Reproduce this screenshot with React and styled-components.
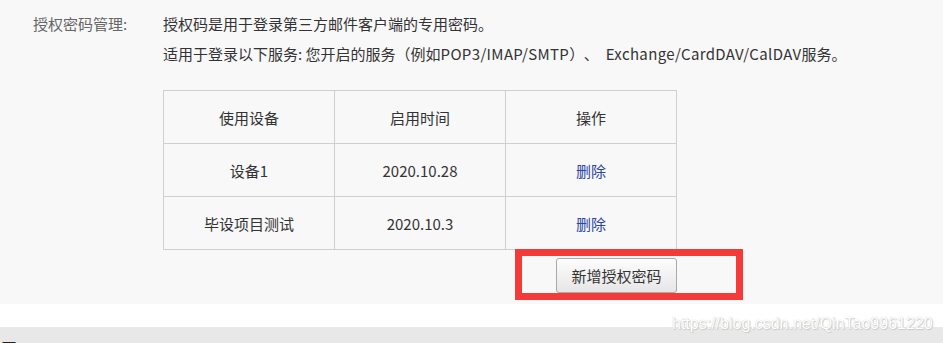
import React from "react";
import styled, { createGlobalStyle } from "styled-components";

const Global = createGlobalStyle`
  html, body { margin: 0; padding: 0; background: #ffffff; }
  body { font-family: "Noto Sans CJK SC", "Noto Sans", sans-serif; }
`;

const Page = styled.div`
  position: relative;
  width: 943px;
  height: 343px;
  overflow: hidden;
  display: flex;
  flex-direction: column;
`;

const Panel = styled.section`
  height: 304px;
  background: #f8f8f8;
  display: flex;
  padding-top: 9px;
  box-sizing: border-box;
`;

const Label = styled.div`
  width: 130px;
  padding-left: 33px;
  font-size: 15px;
  line-height: 30px;
  color: #666;
  flex: none;
`;

const Content = styled.div`
  display: flex;
  flex-direction: column;
`;

const Line = styled.p`
  margin: 0;
  font-size: 15px;
  line-height: 30px;
  color: #333;
  white-space: nowrap;
`;

const Latin = styled.span`
  letter-spacing: 0.35px;
`;

const Punct = styled.span`
  letter-spacing: ${(p) => p.$gap || 0}px;
`;

const Table = styled.table`
  margin-top: 21px;
  width: 514px;
  border-collapse: collapse;
  table-layout: fixed;
  font-size: 15px;
  color: #333;
`;

const Cell = styled.td`
  border: 1px solid #cfcfcf;
  height: 52px;
  padding: 0;
  text-align: center;
  font-weight: normal;
  color: ${(p) => (p.$link ? "#2a45a3" : "#333")};
`;

const ButtonRow = styled.div`
  padding-top: 8px;
  padding-left: 393px;
`;

const Button = styled.button`
  width: 121px;
  height: 35px;
  border: 1px solid #a9a9a9;
  border-radius: 3px;
  background: linear-gradient(#fdfdfd, #e6e6e6);
  font-family: inherit;
  font-size: 15px;
  color: #333;
  padding: 0;
`;

const WhiteStrip = styled.div`
  height: 23px;
  background: #ffffff;
`;

const GreyStrip = styled.div`
  flex: 1;
  background: #e8e8e8;
  display: flex;
  align-items: flex-end;
  padding-left: 2px;
`;

const Mark = styled.div`
  width: 12px;
  height: 1px;
  background: #222;
  border-left: 1px solid #d08020;
  border-right: 1px solid #4080c0;
`;

const Highlight = styled.div`
  position: absolute;
  left: 515px;
  top: 249px;
  width: 228px;
  height: 51px;
  box-sizing: border-box;
  border: 7px solid #f53a3a;
  pointer-events: none;
`;

const Watermark = styled.div`
  position: absolute;
  left: 672px;
  top: 314px;
  font-family: "Liberation Sans", Arial, sans-serif;
  font-size: 16px;
  line-height: 20px;
  color: #ffffff;
  text-shadow: 0 0 1px #bbb, 1px 1px 1px #ccc;
  white-space: nowrap;
`;

const rows = [
  ["设备1", "2020.10.28"],
  ["毕设项目测试", "2020.10.3"],
];

export default function App() {
  return (
    <Page>
      <Global />
      <Panel>
        <Label>授权密码管理:</Label>
        <Content>
          <Line>授权码是用于登录第三方邮件客户端的专用密码。</Line>
          <Line>
            适用于登录以下服务: 您开启的服务（例如<Latin>POP3/IMAP/SMTP</Latin>
            <Punct $gap={7}>）、</Punct>
            <Latin>Exchange/CardDAV/CalDAV</Latin>服务。
          </Line>
          <Table>
            <tbody>
              <tr>
                <Cell>使用设备</Cell>
                <Cell>启用时间</Cell>
                <Cell>操作</Cell>
              </tr>
              {rows.map(([d, t]) => (
                <tr key={d}>
                  <Cell>{d}</Cell>
                  <Cell>{t}</Cell>
                  <Cell $link>删除</Cell>
                </tr>
              ))}
            </tbody>
          </Table>
          <ButtonRow>
            <Button>新增授权密码</Button>
          </ButtonRow>
        </Content>
      </Panel>
      <WhiteStrip />
      <GreyStrip>
        <Mark />
      </GreyStrip>
      <Highlight />
      <Watermark>https://blog.csdn.net/QinTao9961220</Watermark>
    </Page>
  );
}
